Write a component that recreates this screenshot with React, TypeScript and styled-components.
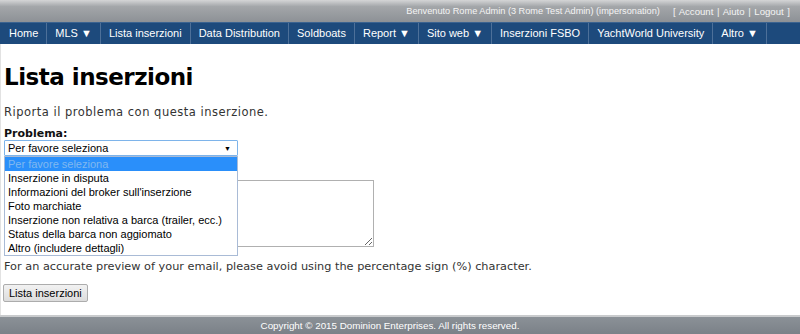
import React from 'react';
import styled, { createGlobalStyle } from 'styled-components';

const GlobalStyle = createGlobalStyle`
	html, body {
		margin: 0;
		padding: 0;
		background: #fff;
	}
`;

const Page = styled.div`
	width: 800px;
	height: 334px;
	display: flex;
	flex-direction: column;
	overflow: hidden;
`;

const TopBar = styled.div`
	height: 22px;
	display: flex;
	justify-content: flex-end;
	align-items: center;
	gap: 13px;
	padding-right: 10px;
	background: linear-gradient(#d4d5d6 0%, #a3a6a9 30%, #8d9196 100%);
	font-family: 'Liberation Sans', Arial, sans-serif;
	font-size: 9.2px;
	color: #f4f4f4;
`;

const UserLinks = styled.span`
	font-size: 9.6px;
	word-spacing: 1px;
`;

const NavBar = styled.nav`
	height: 21px;
	display: flex;
	background: #1d4a7c;
	border-top: 1px solid #3b6390;
`;

const NavItem = styled.div<{ $first?: boolean }>`
	padding: 0 8px 0 ${p => (p.$first ? '9px' : '8px')};
	border-right: 1px solid #4d7099;
	line-height: 21px;
	color: #fff;
	font-family: 'Liberation Sans', Arial, sans-serif;
	font-size: 11px;
	white-space: nowrap;
`;

const Main = styled.main`
	flex: 1;
	padding: 0 3px;
	border-left: 1px solid #e2e2e2;
	font-family: 'DejaVu Sans', Verdana, sans-serif;
	color: #222;
`;

const Title = styled.h1`
	margin: 19px 0 0;
	font-size: 23px;
	letter-spacing: -0.5px;
	font-weight: bold;
	color: #000;
	line-height: 28px;
`;

const Text = styled.p<{ $top: number; $size: number; $spacing?: number }>`
	margin: ${p => p.$top}px 0 0;
	font-size: ${p => p.$size}px;
	letter-spacing: ${p => p.$spacing ?? 0}px;
	line-height: 15px;
	color: #333;
`;

const Label = styled.div`
	margin-top: 7px;
	font-size: 11px;
	font-weight: bold;
	line-height: 13px;
	color: #111;
`;

const SelectWrap = styled.div`
	position: relative;
	width: 234px;
`;

const SelectBox = styled.div`
	height: 14px;
	display: flex;
	justify-content: space-between;
	align-items: center;
	padding: 0 6px 0 3px;
	border: 1px solid #7eb4ea;
	border-radius: 1px;
	font-family: 'Liberation Sans', Arial, sans-serif;
	font-size: 11px;
	color: #000;
`;

const Arrow = styled.span`
	font-size: 7px;
`;

const Listbox = styled.ul`
	position: absolute;
	top: 16px;
	left: 0;
	right: 0;
	margin: 0;
	padding: 0;
	list-style: none;
	background: #fff;
	border: 1px solid #a9bbd6;
	z-index: 2;
`;

const Option = styled.li<{ $active?: boolean }>`
	height: 14px;
	line-height: 14px;
	padding-left: 3px;
	font-family: 'Liberation Sans', Arial, sans-serif;
	font-size: 11px;
	white-space: nowrap;
	background: ${p => (p.$active ? '#2a8ffa' : '#fff')};
	color: ${p => (p.$active ? '#80b8f0' : '#000')};
`;

const Comments = styled.textarea`
	display: block;
	box-sizing: border-box;
	margin-top: 24px;
	width: 370px;
	height: 67px;
	border: 1px solid #b0b0b0;
	resize: both;
`;

const Button = styled.button`
	display: block;
	margin-top: 10px;
	margin-left: -1px;
	height: 18px;
	padding: 0 5px;
	border: 1px solid #acacac;
	border-radius: 2px;
	background: linear-gradient(#f2f2f2, #dcdcdc);
	font-family: 'Liberation Sans', Arial, sans-serif;
	font-size: 11px;
	color: #000;
`;

const Footer = styled.footer`
	height: 17px;
	display: flex;
	justify-content: center;
	align-items: center;
	padding-right: 20px;
	border-top: 2px solid #c9cbcd;
	background: linear-gradient(#8b9197, #7b8188);
	font-family: 'Liberation Sans', Arial, sans-serif;
	font-size: 9.8px;
	color: #fff;
`;

const navItems = [
	'Home',
	'MLS ▼',
	'Lista inserzioni',
	'Data Distribution',
	'Soldboats',
	'Report ▼',
	'Sito web ▼',
	'Inserzioni FSBO',
	'YachtWorld University',
	'Altro ▼',
];

const options = [
	'Per favore seleziona',
	'Inserzione in disputa',
	"Informazioni del broker sull'inserzione",
	'Foto marchiate',
	'Inserzione non relativa a barca (trailer, ecc.)',
	'Status della barca non aggiomato',
	'Altro (includere dettagli)',
];

export default function App() {
	return (
		<Page>
			<GlobalStyle />
			<TopBar>
				<span>Benvenuto Rome Admin (3 Rome Test Admin) (impersonation)</span>
				<UserLinks>[ Account | Aiuto | Logout ]</UserLinks>
			</TopBar>
			<NavBar>
				{navItems.map((item, i) => (
					<NavItem key={item} $first={i === 0}>{item}</NavItem>
				))}
			</NavBar>
			<Main>
				<Title>Lista inserzioni</Title>
				<Text $top={14} $size={11.5} $spacing={0.5}>Riporta il problema con questa inserzione.</Text>
				<Label>Problema:</Label>
				<SelectWrap>
					<SelectBox>
						<span>Per favore seleziona</span>
						<Arrow>▼</Arrow>
					</SelectBox>
					<Listbox>
						{options.map((o, i) => (
							<Option key={o} $active={i === 0}>{o}</Option>
						))}
					</Listbox>
				</SelectWrap>
				<Comments />
				<Text $top={12} $size={11.3}>For an accurate preview of your email, please avoid using the percentage sign (%) character.</Text>
				<Button>Lista inserzioni</Button>
			</Main>
			<Footer>Copyright © 2015 Dominion Enterprises. All rights reserved.</Footer>
		</Page>
	);
}
